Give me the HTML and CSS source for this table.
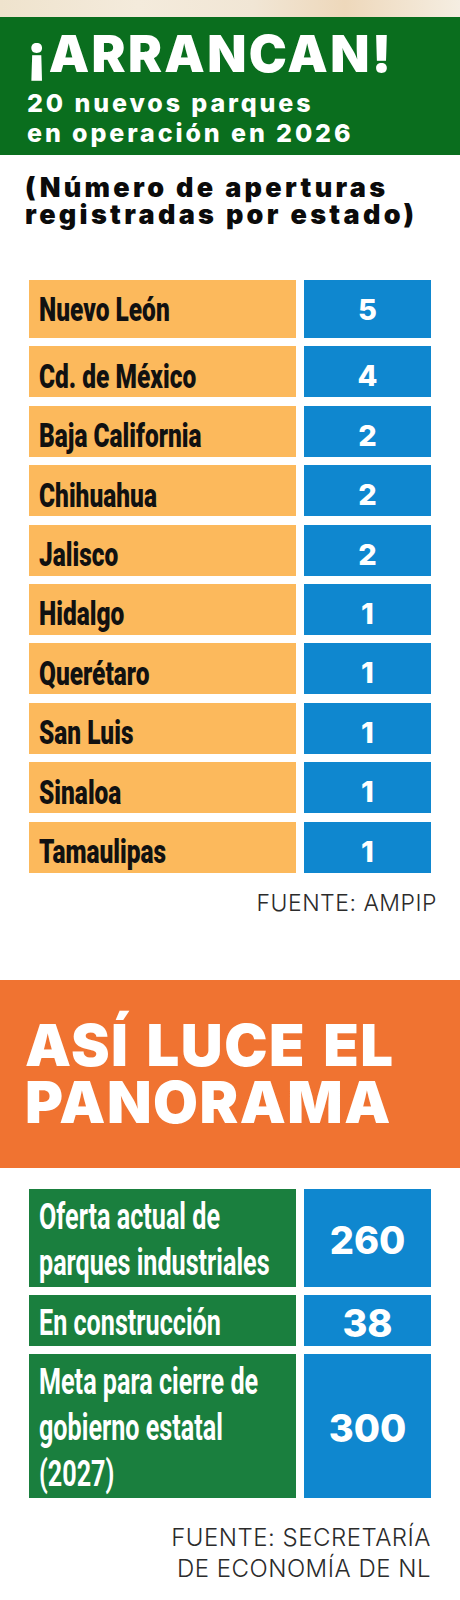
FILE: index.html
```html
<!DOCTYPE html>
<html lang="es">
<head>
<meta charset="utf-8">
<title>¡Arrancan! 20 nuevos parques</title>
<link rel="stylesheet" href="styles.css">
</head>
<body>
<div class="page">
  <div class="photo-strip"></div>
  <header class="band band-green">
    <h1 class="title">¡ARRANCAN!</h1>
    <p class="subtitle">20 nuevos parques<br>en operación en 2026</p>
  </header>
  <p class="note">(Número de aperturas<br>registradas por estado)</p>

  <div class="table t1">
    <div class="row first"><div class="cell label"><span class="cond">Nuevo León</span></div><div class="cell num">5</div></div>
    <div class="row"><div class="cell label"><span class="cond">Cd. de México</span></div><div class="cell num">4</div></div>
    <div class="row"><div class="cell label"><span class="cond">Baja California</span></div><div class="cell num">2</div></div>
    <div class="row"><div class="cell label"><span class="cond">Chihuahua</span></div><div class="cell num">2</div></div>
    <div class="row"><div class="cell label"><span class="cond">Jalisco</span></div><div class="cell num">2</div></div>
    <div class="row"><div class="cell label"><span class="cond">Hidalgo</span></div><div class="cell num">1</div></div>
    <div class="row"><div class="cell label"><span class="cond">Querétaro</span></div><div class="cell num">1</div></div>
    <div class="row"><div class="cell label"><span class="cond">San Luis</span></div><div class="cell num">1</div></div>
    <div class="row"><div class="cell label"><span class="cond">Sinaloa</span></div><div class="cell num">1</div></div>
    <div class="row"><div class="cell label"><span class="cond">Tamaulipas</span></div><div class="cell num">1</div></div>
  </div>
  <p class="source">FUENTE: AMPIP</p>

  <header class="band band-orange">
    <h2 class="big">ASÍ LUCE EL<br>PANORAMA</h2>
  </header>

  <div class="table t2">
    <div class="row r-a"><div class="cell label"><span class="cond">Oferta actual de<br>parques industriales</span></div><div class="cell num">260</div></div>
    <div class="row r-b"><div class="cell label"><span class="cond">En construcción</span></div><div class="cell num">38</div></div>
    <div class="row r-c"><div class="cell label"><span class="cond">Meta para cierre de<br>gobierno estatal<br>(2027)</span></div><div class="cell num">300</div></div>
  </div>
  <p class="source s2">FUENTE: SECRETARÍA<br>DE ECONOMÍA DE NL</p>
</div>
</body>
</html>
```

FILE: styles.css
```css
* { box-sizing: border-box; }
html, body { margin: 0; padding: 0; background: #ffffff; }
body { font-family: Inter, "Noto Sans", sans-serif; color: #111; }

.page { width: 460px; }

.photo-strip {
  height: 17px;
  background: linear-gradient(90deg, #efe3cd 0%, #f4ebdc 30%, #f1e6d5 55%, #eed8bb 75%, #f5eee2 100%);
}

.band { margin: 0; }
.band-green {
  background: #0a6e1e;
  padding: 11px 0 7px 27px;
  height: 138px;
}
.title {
  margin: 0;
  font-family: Inter, sans-serif;
  font-weight: 900;
  font-size: 51px;
  line-height: 51px;
  color: #fff;
  letter-spacing: 2.3px;
}
.subtitle {
  margin: 9px 0 0;
  font-family: Inter, sans-serif;
  font-weight: 800;
  font-size: 25px;
  line-height: 30px;
  color: #fff;
  letter-spacing: 2.9px;
}

.note {
  margin: 19px 0 0 25px;
  font-family: Inter, sans-serif;
  font-weight: 900;
  font-size: 27px;
  line-height: 27px;
  color: #0b0b0b;
  letter-spacing: 3.3px;
}

.table {
  margin: 52px 29px 0;
  display: flex;
  flex-direction: column;
  gap: 8.4px;
}
.t2 { margin-top: 21px; gap: 8px; }

.row {
  display: grid;
  grid-template-columns: 267px 127px;
  column-gap: 8px;
  height: 51px;
}
.row.first { height: 58px; }

.cell {
  display: flex;
  align-items: center;
  padding-top: 8px;
}
.row.first .cell { padding-top: 0; }

.t1 .label { background: #fcb95c; padding-left: 10px; }
.t1 .num { background: #0f87cf; }

.num {
  justify-content: center;
  font-family: Inter, sans-serif;
  font-weight: 800;
  color: #fff;
}
.t1 .num { font-size: 29px; line-height: 29px; }

.cond {
  display: inline-block;
  white-space: nowrap;
  transform: scaleX(0.72);
  transform-origin: left center;
  font-family: Roboto, "Noto Sans", sans-serif;
}
.t1 .cond {
  font-weight: 900;
  font-size: 34px;
  line-height: 34px;
  color: #111;
}

.t2 .label { background: #1a7f3e; padding-left: 10px; padding-top: 5px; }
.t2 .num { background: #0f87cf; padding-top: 5px; font-size: 38px; line-height: 38px; }
.t2 .cond {
  font-weight: 700;
  font-size: 37px;
  line-height: 46px;
  color: #fff;
  transform: scaleX(0.68);
}
.r-a { height: 98px; }
.r-b { height: 51px; }
.r-c { height: 144px; }

.source {
  margin: 19px 23px 0 0;
  text-align: right;
  font-family: Inter, sans-serif;
  font-weight: 300;
  font-size: 23px;
  line-height: 23px;
  color: #2b2b2b;
  letter-spacing: 0.5px;
}
.source.s2 {
  margin: 24px 29px 0 0;
  font-size: 24px;
  line-height: 31px;
}

.band-orange {
  margin-top: 65px;
  background: #f07331;
  height: 188px;
  padding: 37px 0 0 25px;
}
.big {
  margin: 0;
  font-family: Inter, sans-serif;
  font-weight: 900;
  font-size: 58px;
  line-height: 57px;
  color: #fff;
  letter-spacing: 1.5px;
  word-spacing: 4px;
}
```
